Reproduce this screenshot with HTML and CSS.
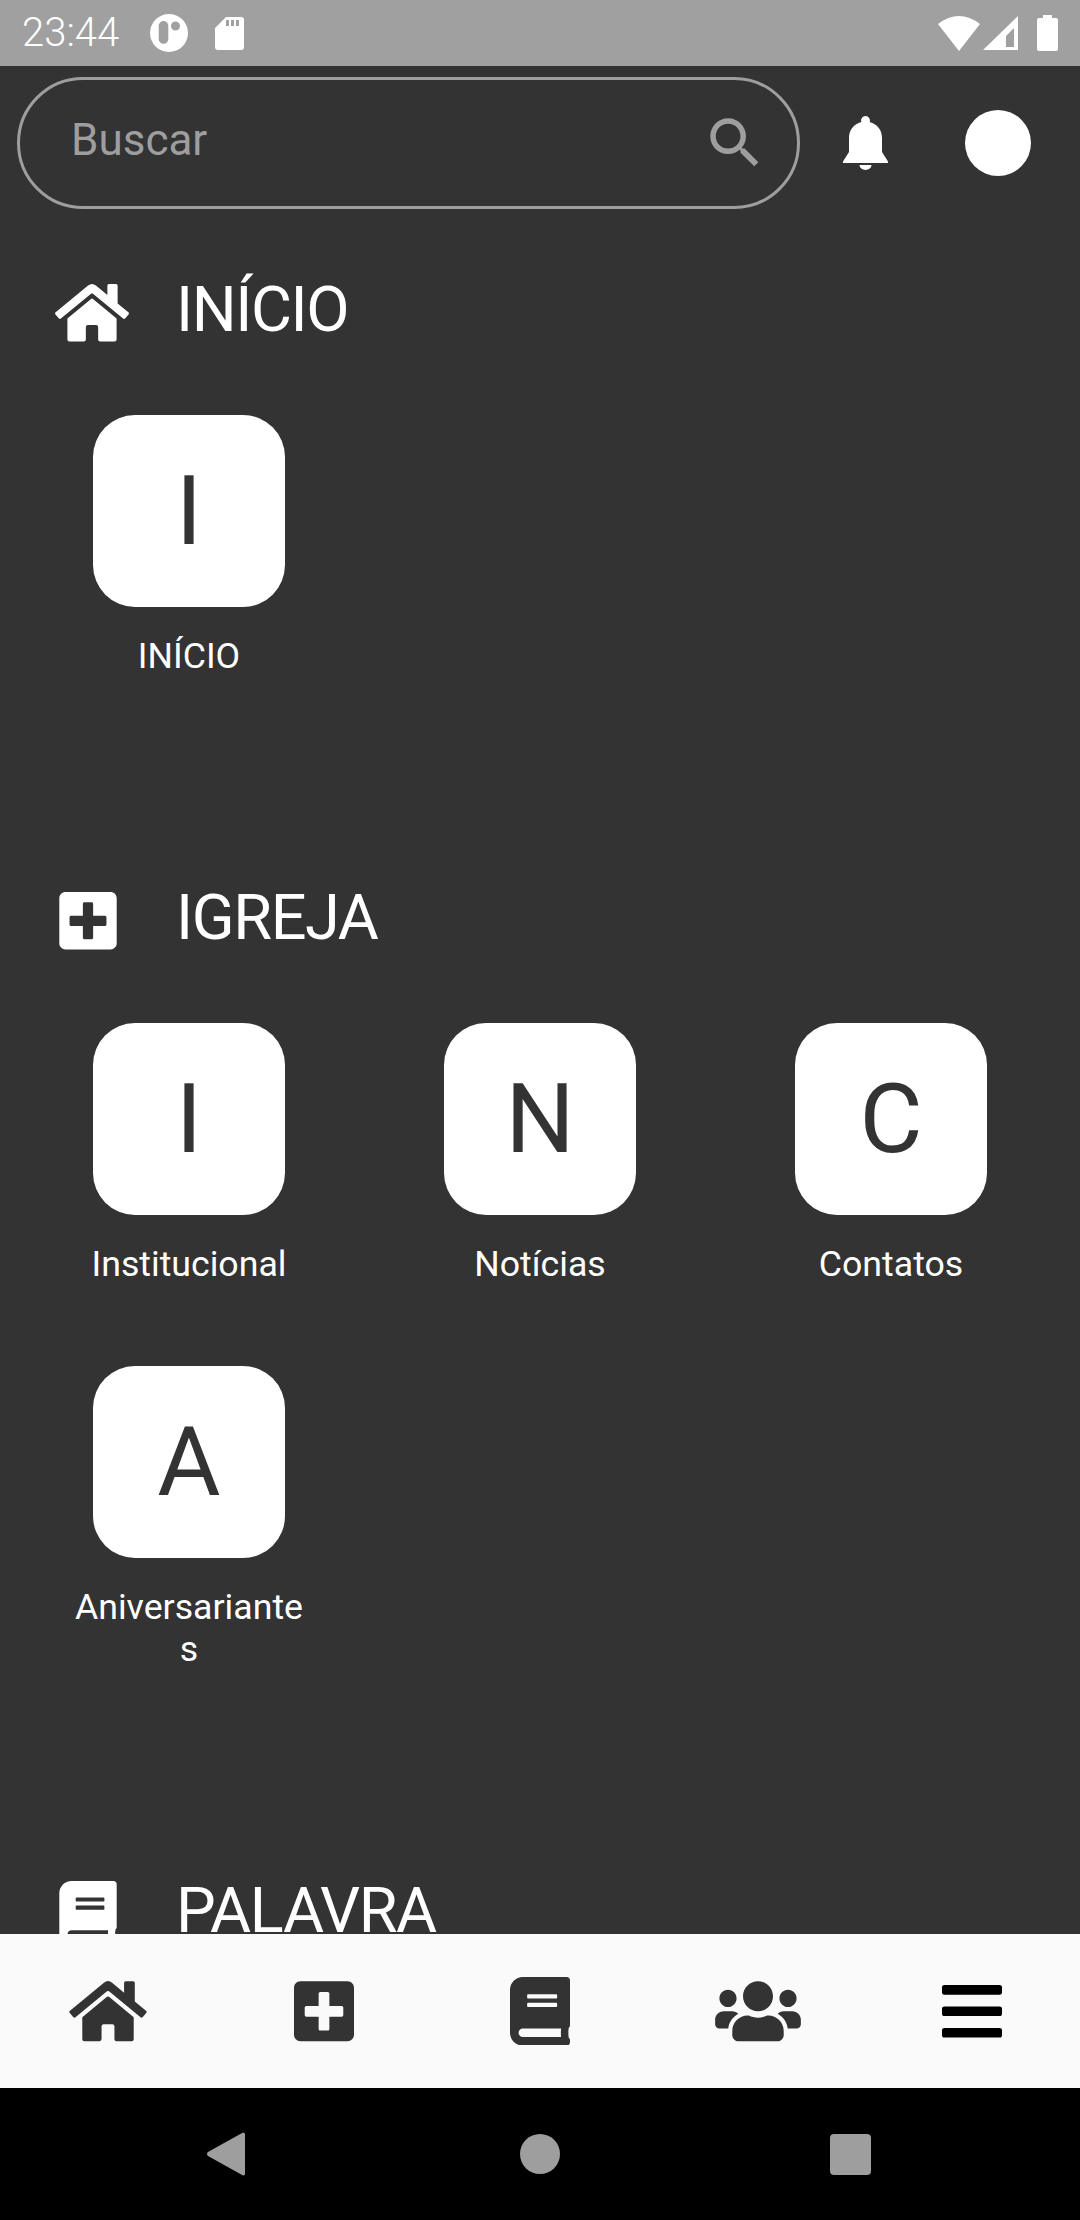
FILE: index.html
```html
<!DOCTYPE html>
<html lang="pt-BR">
<head>
    <meta charset="UTF-8">
    <meta name="viewport" content="width=device-width, initial-scale=1.0">
    <title>Início</title>
    <link rel="stylesheet" href="styles.css">
</head>
<body>
    <!-- icon set, used further down -->
    <svg class="sprite" xmlns="http://www.w3.org/2000/svg">
        <symbol id="i-home" viewBox="0 0 576 512"><path d="M280.37 148.26L96 300.11V464a16 16 0 0 0 16 16l112.06-.29a16 16 0 0 0 15.92-16V368a16 16 0 0 1 16-16h64a16 16 0 0 1 16 16v95.64a16 16 0 0 0 16 16.05L464 480a16 16 0 0 0 16-16V300L295.67 148.26a12.19 12.19 0 0 0-15.3 0zM571.6 251.47L488 182.56V44.05a12 12 0 0 0-12-12h-56a12 12 0 0 0-12 12v72.61L318.47 43a48 48 0 0 0-61 0L4.34 251.47a12 12 0 0 0-1.6 16.9l25.5 31A12 12 0 0 0 45.15 301l235.22-193.74a12.19 12.19 0 0 1 15.3 0L530.9 301a12 12 0 0 0 16.9-1.6l25.5-31a12 12 0 0 0-1.7-16.93z"/></symbol>
        <symbol id="i-plus" viewBox="0 0 448 512"><path d="M400 32H48C21.5 32 0 53.5 0 80v352c0 26.5 21.5 48 48 48h352c26.5 0 48-21.5 48-48V80c0-26.5-21.5-48-48-48zm-32 252c0 6.6-5.4 12-12 12h-92v92c0 6.6-5.4 12-12 12h-56c-6.6 0-12-5.4-12-12v-92H92c-6.6 0-12-5.4-12-12v-56c0-6.6 5.4-12 12-12h92v-92c0-6.6 5.4-12 12-12h56c6.6 0 12 5.4 12 12v92h92c6.6 0 12 5.4 12 12v56z"/></symbol>
        <symbol id="i-book" viewBox="0 0 448 512"><path d="M448 360V24c0-13.3-10.7-24-24-24H96C43 0 0 43 0 96v320c0 53 43 96 96 96h328c13.3 0 24-10.7 24-24v-16c0-7.5-3.5-14.3-8.9-18.7-4.2-15.4-4.2-59.3 0-74.7 5.4-4.3 8.9-11.1 8.9-18.6zM128 134c0-3.3 2.7-6 6-6h212c3.3 0 6 2.7 6 6v20c0 3.3-2.7 6-6 6H134c-3.3 0-6-2.7-6-6v-20zm0 64c0-3.3 2.7-6 6-6h212c3.3 0 6 2.7 6 6v20c0 3.3-2.7 6-6 6H134c-3.3 0-6-2.7-6-6v-20zm253.4 250H96c-17.7 0-32-14.3-32-32 0-17.6 14.4-32 32-32h285.4c-1.9 17.1-1.9 46.9 0 64z"/></symbol>
        <symbol id="i-users" viewBox="0 0 640 512"><path d="M96 224c35.3 0 64-28.7 64-64s-28.7-64-64-64-64 28.7-64 64 28.7 64 64 64zm448 0c35.3 0 64-28.7 64-64s-28.7-64-64-64-64 28.7-64 64 28.7 64 64 64zm32 32h-64c-17.6 0-33.5 7.1-45.1 18.6 40.3 22.1 68.9 62 75.1 109.4h66c17.7 0 32-14.3 32-32v-32c0-35.3-28.7-64-64-64zm-256 0c61.9 0 112-50.1 112-112S381.9 32 320 32 208 82.1 208 144s50.1 112 112 112zm76.8 32h-8.3c-20.8 10-43.9 16-68.5 16s-47.6-6-68.5-16h-8.3C179.6 288 128 339.6 128 403.2V432c0 26.5 21.5 48 48 48h288c26.5 0 48-21.5 48-48v-28.8c0-63.6-51.6-115.2-115.2-115.2zm-223.7-13.4C161.5 263.1 145.6 256 128 256H64c-35.3 0-64 28.7-64 64v32c0 17.7 14.3 32 32 32h65.9c6.3-47.4 34.9-87.3 75.2-109.4z"/></symbol>
        <symbol id="i-bars" viewBox="0 0 448 512"><path d="M16 132h416c8.837 0 16-7.163 16-16V76c0-8.837-7.163-16-16-16H16C7.163 60 0 67.163 0 76v40c0 8.837 7.163 16 16 16zm0 160h416c8.837 0 16-7.163 16-16v-40c0-8.837-7.163-16-16-16H16c-8.837 0-16 7.163-16 16v40c0 8.837 7.163 16 16 16zm0 160h416c8.837 0 16-7.163 16-16v-40c0-8.837-7.163-16-16-16H16c-8.837 0-16 7.163-16 16v40c0 8.837 7.163 16 16 16z"/></symbol>
    </svg>

    <div class="status-bar">
        <span class="status-time">23:44</span>
        <svg class="status-mask" viewBox="0 0 38 38"><path fill-rule="evenodd" d="M19 0a19 19 0 1 1 0 38a19 19 0 1 1 0-38zM13.5 7a4.8 4.8 0 0 0-4.8 4.8V25a4.8 4.8 0 0 0 9.6 0V11.800a4.800 4.800 0 0 0-4.800-4.800zM25.500 7.500a4.500 4.500 0 1 0 0 9a4.500 4.500 0 1 0 0-9z"/></svg>
        <svg class="status-sd" viewBox="0 0 29 33"><path fill-rule="evenodd" d="M11 0H26a3 3 0 0 1 3 3V30a3 3 0 0 1-3 3H3a3 3 0 0 1-3-3V11zM11 3V9H14V3zM16 3V9H19V3zM21 3V9H24V3z"/></svg>
        <svg class="status-wifi" viewBox="0 0 42 35"><path d="M0 8Q21-8 42 8L21 35z"/></svg>
        <svg class="status-signal" viewBox="0 0 35 34"><path fill-rule="evenodd" d="M0 34L35 0V34zM23 31H31V12L23 20z"/></svg>
        <svg class="status-battery" viewBox="0 0 21 36"><path d="M6 0H15V3H19a2 2 0 0 1 2 2V34a2 2 0 0 1-2 2H2a2 2 0 0 1-2-2V5a2 2 0 0 1 2-2H6z"/></svg>
    </div>

    <main class="content">
        <div class="top-row">
            <div class="search-box">
                <span class="search-text">Buscar</span>
                <svg class="search-icon" viewBox="0 0 24 24"><path d="M15.5 14h-.79l-.28-.27C15.410 12.590 16 11.110 16 9.500 16 5.910 13.090 3 9.500 3S3 5.910 3 9.500 5.910 16 9.500 16c1.610 0 3.090-.59 4.230-1.570l.27.28v.79l5 4.990L20.490 19l-4.990-5zm-6 0C7.010 14 5 11.990 5 9.500S7.010 5 9.500 5 14 7.010 14 9.500 11.990 14 9.500 14z"/></svg>
            </div>
            <svg class="bell-icon" viewBox="0 0 45 54"><path d="M22.500 0a4.500 4.500 0 0 1 4.200 6.100C34 8 39 14 39 22V36L45 45.500V47H0V45.500L6 36V22C6 14 11 8 18.300 6.100A4.500 4.500 0 0 1 22.500 0zM16.500 49H28.500A6 5 0 0 1 16.500 49z"/></svg>
            <div class="avatar"></div>
        </div>

        <section class="menu-section">
            <h2 class="section-title">
                <svg class="section-icon icon-wide"><use href="#i-home"/></svg>
                <span>INÍCIO</span>
            </h2>
            <div class="tile-grid">
                <div class="tile-item">
                    <div class="tile">I</div>
                    <p class="tile-label">INÍCIO</p>
                </div>
            </div>
        </section>

        <section class="menu-section">
            <h2 class="section-title">
                <svg class="section-icon"><use href="#i-plus"/></svg>
                <span>IGREJA</span>
            </h2>
            <div class="tile-grid">
                <div class="tile-item">
                    <div class="tile">I</div>
                    <p class="tile-label">Institucional</p>
                </div>
                <div class="tile-item">
                    <div class="tile">N</div>
                    <p class="tile-label">Notícias</p>
                </div>
                <div class="tile-item">
                    <div class="tile">C</div>
                    <p class="tile-label">Contatos</p>
                </div>
                <div class="tile-item">
                    <div class="tile">A</div>
                    <p class="tile-label">Aniversariantes</p>
                </div>
            </div>
        </section>

        <section class="menu-section">
            <h2 class="section-title">
                <svg class="section-icon"><use href="#i-book"/></svg>
                <span>PALAVRA</span>
            </h2>
        </section>
    </main>

    <nav class="tab-bar">
        <a class="tab"><svg class="tab-icon icon-wide"><use href="#i-home"/></svg></a>
        <a class="tab"><svg class="tab-icon"><use href="#i-plus"/></svg></a>
        <a class="tab"><svg class="tab-icon"><use href="#i-book"/></svg></a>
        <a class="tab"><svg class="tab-icon icon-users"><use href="#i-users"/></svg></a>
        <a class="tab tab-menu"><svg class="tab-icon"><use href="#i-bars"/></svg></a>
    </nav>

    <div class="system-nav">
        <svg class="sys-back" viewBox="0 0 38 44"><path d="M36 0.500a2 2 0 0 1 2 1.500V42a2 2 0 0 1-2 1.500L1 24a2.500 2.500 0 0 1 0-4z"/></svg>
        <div class="sys-home"></div>
        <div class="sys-recent"></div>
    </div>
</body>
</html>
```

FILE: styles.css
```css
* {
    box-sizing: border-box;
    margin: 0;
    padding: 0;
}

body {
    width: 1080px;
    height: 2220px;
    display: flex;
    flex-direction: column;
    overflow: hidden;
    font-family: Roboto, "Liberation Sans", sans-serif;
    background-color: #333333;
    color: #ffffff;
}

.sprite {
    display: none;
}

/* Status bar */
.status-bar {
    height: 66px;
    flex-shrink: 0;
    padding: 0 22px 0 22px;
    display: flex;
    align-items: center;
    background-color: #a0a0a0;
}

.status-bar svg {
    fill: #ffffff;
    flex-shrink: 0;
}

.status-time {
    width: 128px;
    font-size: 40px;
    font-weight: 300;
    line-height: 66px;
}

.status-mask {
    width: 38px;
    height: 38px;
}

.status-sd {
    width: 29px;
    height: 33px;
    margin-left: 27px;
}

.status-wifi {
    width: 42px;
    height: 35px;
    margin-left: auto;
}

.status-signal {
    width: 35px;
    height: 34px;
    margin-left: 3px;
}

.status-battery {
    width: 21px;
    height: 36px;
    margin-left: 19px;
}

/* Scrolling content */
.content {
    flex: 1;
    min-height: 0;
    overflow: hidden;
}

.top-row {
    padding: 11px 0 0 17px;
    display: flex;
    align-items: center;
}

.search-box {
    width: 783px;
    height: 132px;
    padding: 0 29px 0 51px;
    display: flex;
    align-items: center;
    justify-content: space-between;
    border: 3px solid #9e9e9e;
    border-radius: 66px;
}

.search-text {
    margin-bottom: 7px;
    font-size: 44px;
    color: #9e9e9e;
}

.search-icon {
    width: 66px;
    height: 66px;
    fill: #9e9e9e;
}

.bell-icon {
    width: 45px;
    height: 54px;
    margin-left: 43px;
    fill: #ffffff;
}

.avatar {
    width: 66px;
    height: 66px;
    margin-left: 77px;
    border-radius: 50%;
    background-color: #ffffff;
}

/* Sections */
.menu-section {
    margin-bottom: 204px;
}

.section-title {
    height: 74px;
    padding-left: 59px;
    display: flex;
    align-items: center;
    font-size: 63px;
    font-weight: 400;
    line-height: 74px;
    letter-spacing: -1.4px;
}

.menu-section:first-of-type .section-title {
    margin-top: 64px;
}

.section-title span {
    margin-left: 59px;
}

.section-icon {
    width: 58px;
    height: 65.6px;
    margin-top: 6px;
    fill: #ffffff;
}

.section-icon.icon-wide {
    width: 74px;
    margin-left: -4px;
    margin-right: -12px;
}

.tile-grid {
    margin: 68px 0 0 13.5px;
    display: grid;
    grid-template-columns: repeat(3, 351px);
    row-gap: 81px;
}

.tile-item {
    display: flex;
    flex-direction: column;
    align-items: center;
}

.tile {
    width: 192px;
    height: 192px;
    display: flex;
    align-items: center;
    justify-content: center;
    font-size: 97px;
    color: #333333;
    background-color: #ffffff;
    border-radius: 42px;
}

.tile-label {
    width: 236px;
    margin-top: 28px;
    font-size: 35.7px;
    line-height: 42px;
    text-align: center;
    overflow-wrap: anywhere;
}

/* Bottom tabs */
.tab-bar {
    height: 154px;
    flex-shrink: 0;
    display: flex;
    background-color: #fafafa;
}

.tab {
    flex: 1;
    display: flex;
    align-items: center;
    justify-content: center;
    color: #333333;
}

.tab-menu {
    color: #000000;
}

.tab-icon {
    width: 60px;
    height: 68.6px;
    fill: currentColor;
}

.tab-icon.icon-wide {
    width: 78px;
}

.tab-icon.icon-users {
    width: 86px;
    margin-left: 4px;
}

/* Android buttons */
.system-nav {
    height: 132px;
    flex-shrink: 0;
    padding-left: 207px;
    display: flex;
    align-items: center;
    background-color: #000000;
}

.sys-back {
    width: 38px;
    height: 44px;
    fill: #9e9e9e;
}

.sys-home {
    width: 40px;
    height: 40px;
    margin-left: 275px;
    border-radius: 50%;
    background-color: #9e9e9e;
}

.sys-recent {
    width: 41px;
    height: 41px;
    margin-left: 270px;
    border-radius: 4px;
    background-color: #9e9e9e;
}
```
